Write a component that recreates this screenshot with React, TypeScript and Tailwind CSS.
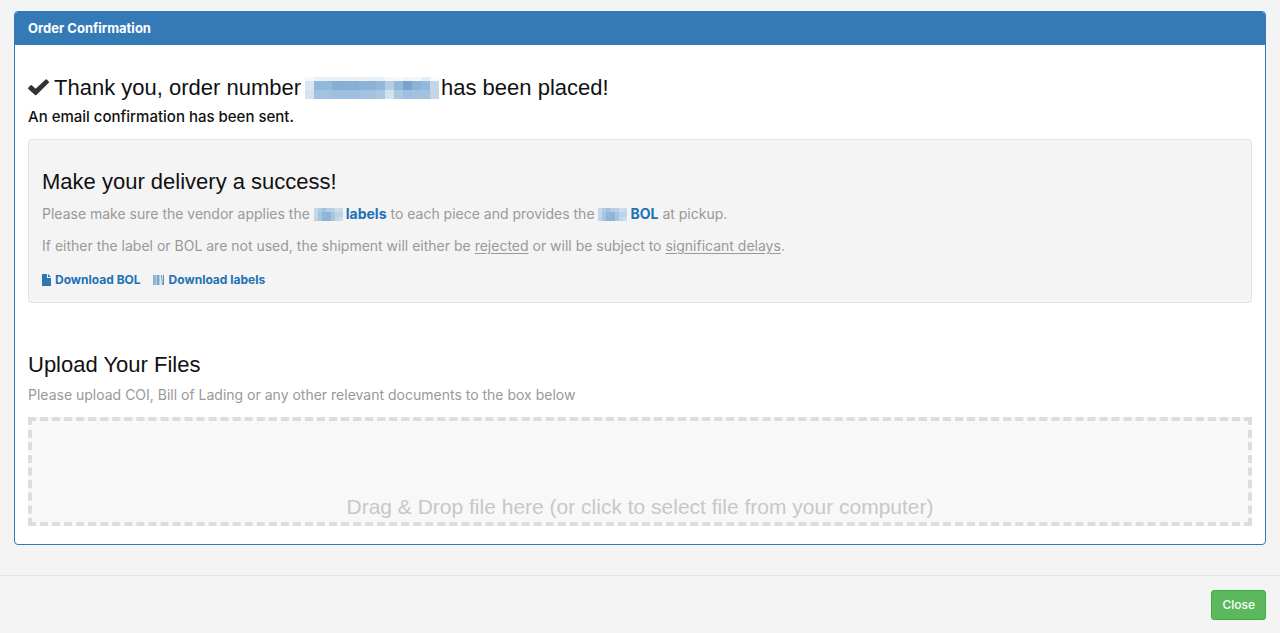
import { useId, type ReactNode } from "react";

const heading = "font-['Liberation_Sans',Arial,sans-serif] text-[22px] leading-6 text-[#111111]";
const body = "text-[14px] leading-5 text-[#999999]";
const link = "text-[#2271b5] hover:underline";

function Mosaic({ rows, heights, cell, className }: { rows: string[][]; heights: number[]; cell: number; className: string }) {
  const width = rows[0].length * cell;
  const tops = heights.map((_, i) => heights.slice(0, i).reduce((sum, h) => sum + h, 0));
  const height = heights.reduce((sum, h) => sum + h, 0);
  return (
    <svg
      className={className}
      viewBox={`0 0 ${width} ${height}`}
      preserveAspectRatio="none"
      shapeRendering="crispEdges"
      aria-hidden="true"
    >
      {rows.map((row, y) =>
        row.map((fill, x) => (
          <rect key={`${x}-${y}`} x={x * cell} y={tops[y]} width={cell} height={heights[y]} fill={fill} />
        )),
      )}
    </svg>
  );
}

const numberRows = [
  ["#f5f8fb", "#eaf2f8", "#e8f1f8", "#e8f1f8", "#eaf2f8", "#eaf2f8", "#eaf2f8", "#e6f0f7", "#e8f1f8", "#f3f7fb", "#f8fafc", "#f0f5fa", "#f5f8fb", "#e4eef6", "#f8fafc"],
  ["#dae6f1", "#92b8da", "#92b8da", "#87afd4", "#87afd4", "#87afd4", "#8cb3d7", "#8cb3d7", "#92b8da", "#b4cee5", "#92b8da", "#77a4ce", "#8cb3d7", "#92b8da", "#c3d5e6"],
  ["#d5e3f0", "#a2c3df", "#a2c3df", "#9dc0de", "#9dc0de", "#9dc0de", "#a2c3df", "#a2c3df", "#aac8e2", "#d2e2ef", "#a9c8e2", "#9dc0de", "#a2c3df", "#a2c3df", "#c3d5e6"],
];

const brandRows = [
  ["#c4d8ea", "#b3cce3", "#a0c1df", "#b5cee4", "#b9d0e5", "#cfdfed", "#c8dbeb"],
  ["#c4d8ea", "#a8c5e0", "#92b8da", "#8eb3d5", "#a8c5e0", "#bcd2e6", "#bfd4e7"],
  ["#c0d5e8", "#a8c5e0", "#8eb3d5", "#8eb3d5", "#a8c5e0", "#c3d7e9", "#cbdcec"],
];

function BrandMosaic() {
  return (
    <Mosaic
      rows={brandRows}
      heights={[4, 5, 4]}
      cell={4}
      className="mr-[3px] inline-block h-[13px] w-[29px] align-[-2px]"
    />
  );
}

function CheckIcon() {
  return (
    <svg className="h-[18px] w-[22px] shrink-0" viewBox="0 0 22 18" fill="#333333" aria-hidden="true">
      <path d="M.3 8.8 2.6 6.3q.6-.5 1.2 0l3.8 3.5L17.6.6q.6-.5 1.2 0l2 2q.5.6 0 1.2L8.4 15.9q-.7.6-1.4 0L.3 10q-.5-.6 0-1.2Z" />
    </svg>
  );
}

function FileIcon() {
  return (
    <svg className="h-[12px] w-[9px]" viewBox="0 0 9 12" fill="#2f76b5" aria-hidden="true">
      <path d="M.5 0H5v4h4v7.5q0 .5-.5.5h-8q-.5 0-.5-.5V.5Q0 0 .5 0ZM6 0l3 3H6Z" />
    </svg>
  );
}

function LabelsIcon() {
  return (
    <svg className="h-[10px] w-[12px]" viewBox="0 0 12 10" aria-hidden="true">
      <path fill="#8fb5d8" d="M0 0h3v10H0z" />
      <path fill="#b4cde4" d="M3 0h1v10H3zM6 0h1v10H6z" />
      <path fill="#7ca8d0" d="M4 0h2v10H4z" />
      <path fill="#dfe9f2" d="M7 0h1v10H7z" />
      <path fill="#6698c8" d="M8 0h1l1 10H9z" />
      <path fill="#5e93c5" d="M10 0h1v10h-1z" />
    </svg>
  );
}

function DownloadLink({ icon, children }: { icon: ReactNode; children: ReactNode }) {
  return (
    <a href="#" className={`flex items-center gap-1 text-[12px] leading-5 font-bold ${link}`}>
      {icon}
      {children}
    </a>
  );
}

export default function App() {
  const fileId = useId();
  return (
    <div className="min-h-screen bg-[#f4f4f4] font-['Inter',sans-serif]">
      <main className="px-3.5 pt-[11px] pb-[30px]">
        <section className="overflow-hidden rounded-[4px] border border-[#337ab7] bg-white">
          <header className="bg-[#337ab7] px-[13px] py-[6px]">
            <h1 className="text-[13px] leading-[21px] font-bold text-white">Order Confirmation</h1>
          </header>

          <div className="px-[13px] pt-[31px] pb-[18px]">
            <h2 className={`flex items-center ${heading}`}>
              <CheckIcon />
              <span className="ml-1">Thank you, order number</span>
              <Mosaic rows={numberRows} heights={[4, 9, 9]} cell={9} className="mr-0.5 ml-1 h-[22px] w-[134px]" />
              <span>has been placed!</span>
            </h2>
            <p className="mt-[7px] text-[15px] leading-5 font-medium text-[#111111]">
              An email confirmation has been sent.
            </p>

            <div className="mt-3 rounded-[3px] border border-[#e3e3e3] bg-[#f4f4f4] px-[13px] pt-[30px] pb-3">
              <h3 className={heading}>Make your delivery a success!</h3>
              <p className={`mt-2.5 ${body}`}>
                Please make sure the vendor applies the <BrandMosaic />
                <a href="#" className={`font-bold ${link}`}>labels</a> to each piece and provides the <BrandMosaic />
                <a href="#" className={`font-bold ${link}`}>BOL</a> at pickup.
              </p>
              <p className={`mt-3 ${body}`}>
                If either the label or BOL are not used, the shipment will either be{" "}
                <u className="underline-offset-2">rejected</u> or will be subject to{" "}
                <u className="underline-offset-2">significant delays</u>.
              </p>
              <div className="mt-3.5 flex gap-3">
                <DownloadLink icon={<FileIcon />}>Download BOL</DownloadLink>
                <DownloadLink icon={<LabelsIcon />}>Download labels</DownloadLink>
              </div>
            </div>

            <h3 className={`mt-[50px] ${heading}`}>Upload Your Files</h3>
            <p className={`mt-2 ${body}`}>
              Please upload COI, Bill of Lading or any other relevant documents to the box below
            </p>
            <label
              htmlFor={fileId}
              className="mt-3 flex cursor-pointer justify-center border-4 border-dashed border-[#dddddd] bg-[#f8f8f8] px-4 pt-[74px] pb-[3px] text-center font-['Liberation_Sans',Arial,sans-serif] text-[21px] leading-6 text-[#c8c8c8]"
            >
              Drag &amp; Drop file here (or click to select file from your computer)
              <input id={fileId} type="file" multiple className="sr-only" />
            </label>
          </div>
        </section>
      </main>

      <footer className="flex justify-end border-t border-[#e5e5e5] px-3.5 py-3.5">
        <button
          type="button"
          className="rounded-[3px] border border-[#3fae3f] bg-[#5cb85c] px-2.5 py-1 text-[12px] leading-5 font-medium text-white"
        >
          Close
        </button>
      </footer>
    </div>
  );
}
